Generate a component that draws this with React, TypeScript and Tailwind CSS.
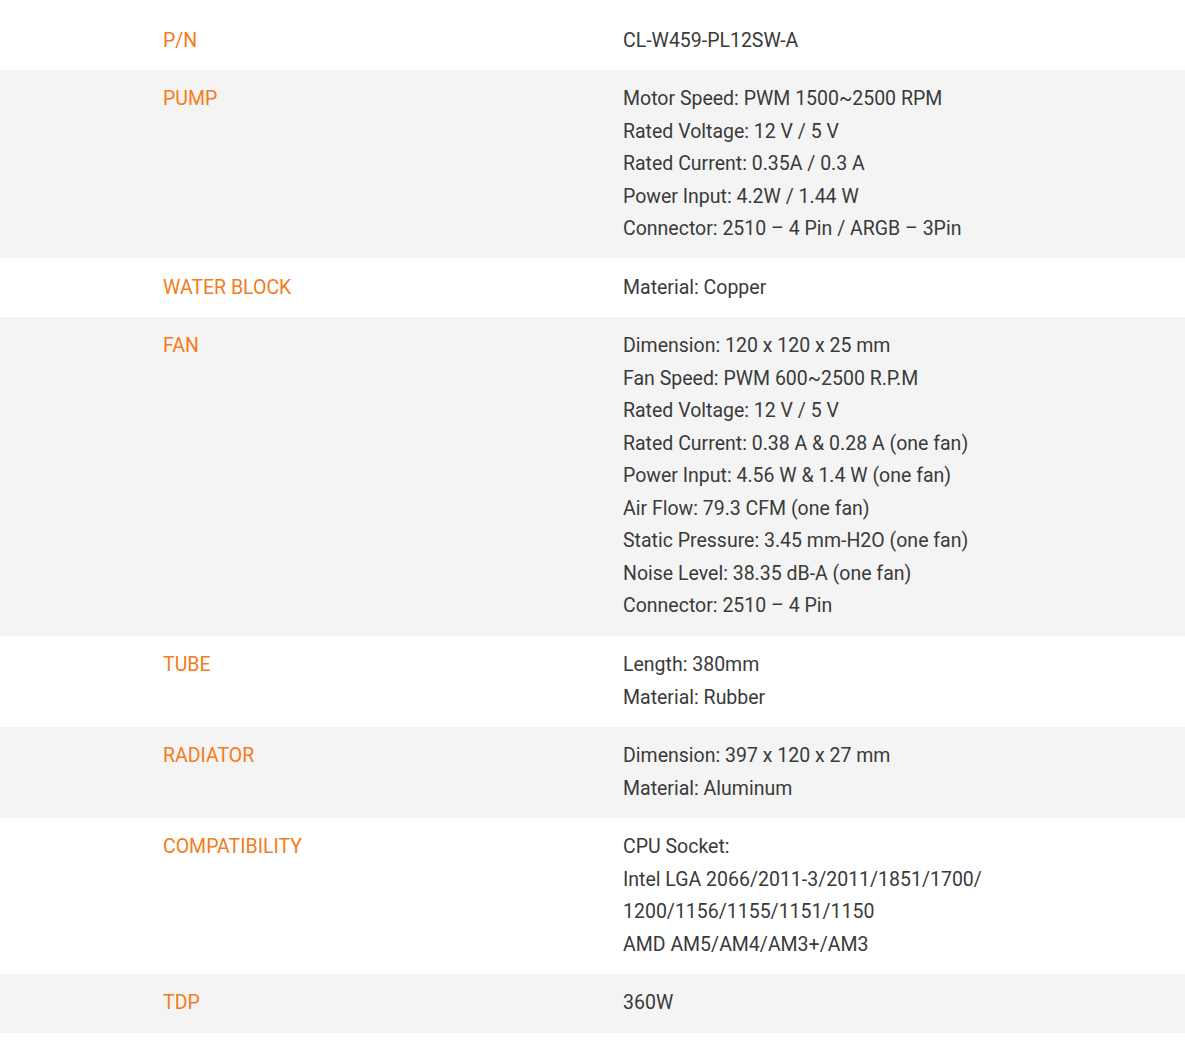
const specs: { label: string; lines: string[] }[] = [
  { label: "P/N", lines: ["CL-W459-PL12SW-A"] },
  {
    label: "PUMP",
    lines: [
      "Motor Speed: PWM 1500~2500 RPM",
      "Rated Voltage: 12 V / 5 V",
      "Rated Current: 0.35A / 0.3 A",
      "Power Input: 4.2W / 1.44 W",
      "Connector: 2510 – 4 Pin / ARGB – 3Pin",
    ],
  },
  { label: "WATER BLOCK", lines: ["Material: Copper"] },
  {
    label: "FAN",
    lines: [
      "Dimension: 120 x 120 x 25 mm",
      "Fan Speed: PWM 600~2500 R.P.M",
      "Rated Voltage: 12 V / 5 V",
      "Rated Current: 0.38 A & 0.28 A (one fan)",
      "Power Input: 4.56 W & 1.4 W (one fan)",
      "Air Flow: 79.3 CFM (one fan)",
      "Static Pressure: 3.45 mm-H2O (one fan)",
      "Noise Level: 38.35 dB-A (one fan)",
      "Connector: 2510 – 4 Pin",
    ],
  },
  { label: "TUBE", lines: ["Length: 380mm", "Material: Rubber"] },
  {
    label: "RADIATOR",
    lines: ["Dimension: 397 x 120 x 27 mm", "Material: Aluminum"],
  },
  {
    label: "COMPATIBILITY",
    lines: [
      "CPU Socket:",
      "Intel LGA 2066/2011-3/2011/1851/1700/",
      "1200/1156/1155/1151/1150",
      "AMD AM5/AM4/AM3+/AM3",
    ],
  },
  { label: "TDP", lines: ["360W"] },
];

export default function App() {
  return (
    <div
      className="min-h-[1055px] bg-white pt-[11px] text-[19.5px] leading-[32.5px]"
      style={{ fontFamily: "Roboto, 'Liberation Sans', sans-serif" }}
    >
      {specs.map((row, i) => (
        <div
          key={row.label}
          className={`flex pt-[13.5px] pb-[12.65px] pl-[163px] ${i % 2 === 1 ? "bg-[#f4f4f4]" : "bg-white"}`}
        >
          <div className="w-[460px] shrink-0 text-[#f47b20]">{row.label}</div>
          <div className="text-[#3a3a3a]">
            {row.lines.map((line) => (
              <div key={line}>{line}</div>
            ))}
          </div>
        </div>
      ))}
    </div>
  );
}
